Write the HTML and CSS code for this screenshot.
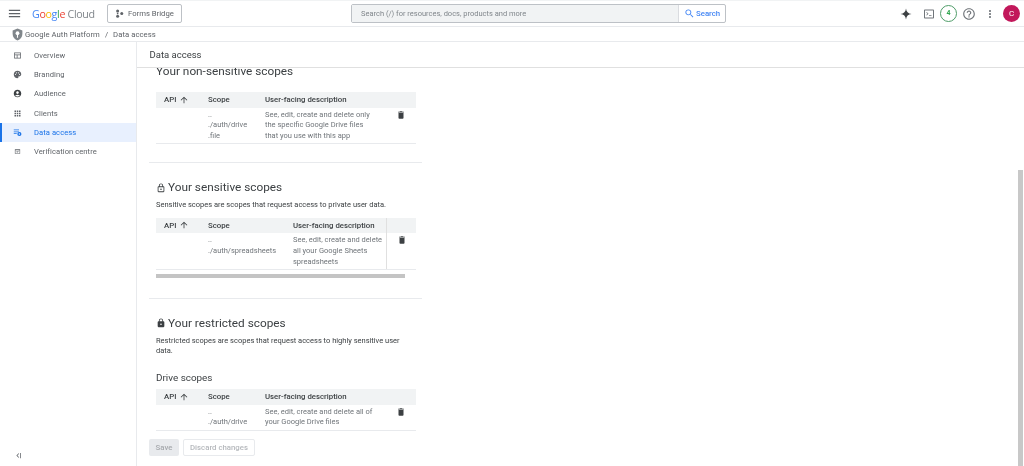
FILE: index.html
```html
<!DOCTYPE html>
<html lang="en">
<head>
<meta charset="utf-8">
<title>Data access</title>
<link rel="stylesheet" href="styles.css">
</head>
<body>
<header class="topbar">
  <svg class="ic menu" viewBox="0 0 24 24"><path d="M3 18h18v-2H3v2zm0-5h18v-2H3v2zm0-7v2h18V6H3z"/></svg>
  <div class="logo"><span class="b">G</span><span class="r">o</span><span class="y">o</span><span class="b">g</span><span class="g">l</span><span class="r">e</span><span class="cloud"> Cloud</span></div>
  <div class="project">
    <svg class="ic proj" viewBox="0 0 24 24"><circle cx="7" cy="5" r="4"/><circle cx="7" cy="19" r="4"/><circle cx="18" cy="12" r="4"/><rect x="5" y="10" width="4" height="4"/></svg>
    <span>Forms Bridge</span>
  </div>
  <div class="search">
    <div class="search-input">Search (/) for resources, docs, products and more</div>
    <div class="search-btn">
      <svg class="ic sicon" viewBox="0 0 24 24"><path d="M15.5 14h-.79l-.28-.27C15.41 12.59 16 11.11 16 9.5 16 5.91 13.09 3 9.5 3S3 5.91 3 9.5 5.91 16 9.5 16c1.61 0 3.09-.59 4.23-1.57l.27.28v.79l5 4.99L20.49 19l-4.99-5zm-6 0C7.01 14 5 11.99 5 9.5S7.01 5 9.5 5 14 7.01 14 9.5 11.99 14 9.5 14z"/></svg>
      <span>Search</span>
    </div>
  </div>
  <div class="actions">
    <svg class="ic spark" viewBox="0 0 24 24"><path d="M12 1C12.8 7.8 16.2 11.2 23 12 16.2 12.8 12.8 16.2 12 23 11.2 16.2 7.8 12.8 1 12 7.8 11.2 11.2 7.8 12 1Z"/></svg>
    <svg class="ic term" viewBox="0 0 24 24"><path d="M20 3H4c-1.1 0-2 .9-2 2v14c0 1.1.9 2 2 2h16c1.1 0 2-.9 2-2V5c0-1.1-.9-2-2-2zm0 16H4V5h16v14zM6.5 9l1-1 3.500 3.500L7.500 15l-1-1 2.500-2.500zM12 14h5v1.500h-5z"/></svg>
    <div class="badge">4</div>
    <svg class="ic help" viewBox="0 0 24 24"><path d="M11 18h2v-2h-2v2zm1-16C6.48 2 2 6.48 2 12s4.48 10 10 10 10-4.48 10-10S17.52 2 12 2zm0 18c-4.41 0-8-3.59-8-8s3.59-8 8-8 8 3.59 8 8-3.59 8-8 8zm0-14c-2.21 0-4 1.79-4 4h2c0-1.1.9-2 2-2s2 .9 2 2c0 2-3 1.750-3 5h2c0-2.250 3-2.500 3-5 0-2.210-1.790-4-4-4z"/></svg>
    <svg class="ic more" viewBox="0 0 24 24"><path d="M12 8c1.100 0 2-.9 2-2s-.9-2-2-2-2 .9-2 2 .9 2 2 2zm0 2c-1.100 0-2 .9-2 2s.9 2 2 2 2-.9 2-2-.9-2-2-2zm0 6c-1.100 0-2 .9-2 2s.9 2 2 2 2-.9 2-2-.9-2-2-2z"/></svg>
    <div class="avatar">C</div>
  </div>
</header>

<div class="crumbs">
  <svg class="ic shield" viewBox="0 0 24 24"><path d="M12 1 3 4.500v6.500c0 5.500 3.800 10.400 9 12 5.200-1.600 9-6.500 9-12V4.500L12 1z"/><circle cx="12" cy="9.500" r="3.500" fill="#fff"/><rect x="11" y="11" width="2" height="7" fill="#fff"/></svg>
  <span>Google Auth Platform</span><span class="sep">/</span><span>Data access</span>
</div>

<div class="shell">
  <nav class="sidebar">
    <ul class="nav">
      <li class="nav-item">
        <svg class="ic nav-ic" viewBox="0 0 24 24"><path d="M3 4h18v16H3V4zm2 2v3h14V6H5zm0 5v7h5v-7H5zm7 0v7h7v-7h-7z"/></svg>
        <span>Overview</span>
      </li>
      <li class="nav-item">
        <svg class="ic nav-ic" viewBox="0 0 24 24"><path d="M12 2C6.490 2 2 6.490 2 12s4.490 10 10 10c1.380 0 2.500-1.120 2.500-2.500 0-.61-.23-1.200-.64-1.670-.08-.1-.13-.21-.13-.33 0-.28.22-.5.5-.5H16c3.310 0 6-2.690 6-6 0-4.960-4.490-9-10-9zm5.500 11c-.83 0-1.500-.67-1.500-1.500s.67-1.500 1.500-1.500 1.500.67 1.500 1.500-.67 1.500-1.500 1.500zm-3-4c-.83 0-1.500-.67-1.500-1.500S13.670 6 14.500 6s1.500.67 1.500 1.500S15.330 9 14.500 9zM5 11.500c0-.83.67-1.500 1.500-1.500s1.500.67 1.500 1.500S7.330 13 6.500 13 5 12.330 5 11.500zm6-4c0 .83-.67 1.500-1.500 1.500S8 8.330 8 7.500 8.670 6 9.500 6s1.500.67 1.500 1.500z"/></svg>
        <span>Branding</span>
      </li>
      <li class="nav-item">
        <svg class="ic nav-ic dark" viewBox="0 0 24 24"><path d="M12 2C6.480 2 2 6.480 2 12s4.480 10 10 10 10-4.480 10-10S17.520 2 12 2zm0 4c1.930 0 3.500 1.570 3.500 3.500S13.930 13 12 13s-3.500-1.570-3.500-3.500S10.070 6 12 6zm0 14c-2.030 0-4.430-.82-6.140-2.880C7.550 15.800 9.680 15 12 15s4.450.8 6.140 2.120C16.430 19.180 14.030 20 12 20z"/></svg>
        <span>Audience</span>
      </li>
      <li class="nav-item">
        <svg class="ic nav-ic" viewBox="0 0 24 24"><path d="M4 8h4V4H4v4zm6 12h4v-4h-4v4zm-6 0h4v-4H4v4zm0-6h4v-4H4v4zm6 0h4v-4h-4v4zm6-10v4h4V4h-4zm-6 4h4V4h-4v4zm6 6h4v-4h-4v4zm0 6h4v-4h-4v4z"/></svg>
        <span>Clients</span>
      </li>
      <li class="nav-item active">
        <svg class="ic nav-ic" viewBox="0 0 24 24"><path d="M2 4h14v2H2V4zm0 5h14v2H2V9zm0 5h8v2H2v-2z"/><circle cx="17" cy="16" r="5.500"/><circle cx="17" cy="16" r="2" fill="#e8f0fe"/></svg>
        <span>Data access</span>
      </li>
      <li class="nav-item">
        <svg class="ic nav-ic small" viewBox="0 0 24 24"><path d="M3 4h18v16H3V4zm2 4v10h14V8H5zm3 5 1.500-1.500 1.500 1.500 3.500-3.500L16 11l-5 5-3-3z"/></svg>
        <span>Verification centre</span>
      </li>
    </ul>
    <svg class="ic collapse" viewBox="0 0 24 24"><path d="M15 6 9 12l6 6 1.400-1.400L11.800 12l4.600-4.600L15 6zM19 5h2v14h-2z"/></svg>
  </nav>

  <main class="main">
    <div class="page-title">Data access</div>
    <div class="pane">
      <div class="content">
        <section class="sec first">
          <h2 class="h2 plain">Your non-sensitive scopes</h2>
          <div class="table">
            <div class="row head"><div class="cell api">API <svg class="ic arrow" viewBox="0 0 24 24"><path d="M4 12l1.410 1.410L11 7.830V20h2V7.830l5.580 5.590L20 12l-8-8-8 8z"/></svg></div><div class="cell">Scope</div><div class="cell">User-facing description</div><div class="cell"></div></div>
            <div class="row body">
              <div class="cell"></div>
              <div class="cell">..<br>./auth/drive<br>.file</div>
              <div class="cell desc">See, edit, create and delete only the specific Google Drive files that you use with this app</div>
              <div class="cell trash"><svg class="ic del" viewBox="0 0 24 24"><path d="M6 19c0 1.100.9 2 2 2h8c1.100 0 2-.9 2-2V7H6v12zM19 4h-3.500l-1-1h-5l-1 1H5v2h14V4z"/></svg></div>
            </div>
          </div>
        </section>
        <hr class="rule r1">
        <section class="sec">
          <h2 class="h2"><svg class="ic lock" viewBox="0 0 24 24"><path d="M18 8h-1V6c0-2.760-2.240-5-5-5S7 3.240 7 6v2H6c-1.100 0-2 .9-2 2v10c0 1.100.9 2 2 2h12c1.100 0 2-.9 2-2V10c0-1.100-.9-2-2-2zM9 6c0-1.660 1.340-3 3-3s3 1.340 3 3v2H9V6zm9 14H6V10h12v10zm-6-3c1.100 0 2-.9 2-2s-.9-2-2-2-2 .9-2 2 .9 2 2 2z"/></svg>Your sensitive scopes</h2>
          <p class="para">Sensitive scopes are scopes that request access to private user data.</p>
          <div class="table wide">
            <div class="row head"><div class="cell api">API <svg class="ic arrow" viewBox="0 0 24 24"><path d="M4 12l1.410 1.410L11 7.830V20h2V7.830l5.580 5.590L20 12l-8-8-8 8z"/></svg></div><div class="cell">Scope</div><div class="cell">User-facing description</div><div class="cell divided"></div></div>
            <div class="row body">
              <div class="cell"></div>
              <div class="cell">..<br>./auth/spreadsheets</div>
              <div class="cell">See, edit, create and delete all your Google Sheets spreadsheets</div>
              <div class="cell trash divided"><svg class="ic del" viewBox="0 0 24 24"><path d="M6 19c0 1.100.9 2 2 2h8c1.100 0 2-.9 2-2V7H6v12zM19 4h-3.500l-1-1h-5l-1 1H5v2h14V4z"/></svg></div>
            </div>
          </div>
          <div class="hscroll"></div>
        </section>
        <hr class="rule r2">
        <section class="sec">
          <h2 class="h2"><svg class="ic lock" viewBox="0 0 24 24"><path d="M18 8h-1V6c0-2.760-2.240-5-5-5S7 3.240 7 6v2H6c-1.100 0-2 .9-2 2v10c0 1.100.9 2 2 2h12c1.100 0 2-.9 2-2V10c0-1.100-.9-2-2-2zm-6 9c-1.100 0-2-.9-2-2s.9-2 2-2 2 .9 2 2-.9 2-2 2zm3.100-9H8.900V6c0-1.710 1.390-3.100 3.100-3.100 1.710 0 3.100 1.390 3.100 3.100v2z"/></svg>Your restricted scopes</h2>
          <p class="para narrow">Restricted scopes are scopes that request access to highly sensitive user data.</p>
          <h3 class="h3">Drive scopes</h3>
          <div class="table">
            <div class="row head"><div class="cell api">API <svg class="ic arrow" viewBox="0 0 24 24"><path d="M4 12l1.410 1.410L11 7.830V20h2V7.830l5.580 5.590L20 12l-8-8-8 8z"/></svg></div><div class="cell">Scope</div><div class="cell">User-facing description</div><div class="cell"></div></div>
            <div class="row body short">
              <div class="cell"></div>
              <div class="cell">..<br>./auth/drive</div>
              <div class="cell desc">See, edit, create and delete all of your Google Drive files</div>
              <div class="cell trash"><svg class="ic del" viewBox="0 0 24 24"><path d="M6 19c0 1.100.9 2 2 2h8c1.100 0 2-.9 2-2V7H6v12zM19 4h-3.500l-1-1h-5l-1 1H5v2h14V4z"/></svg></div>
            </div>
          </div>
        </section>
        <div class="buttons">
          <button class="btn save">Save</button>
          <button class="btn discard">Discard changes</button>
        </div>
      </div>
      <div class="vscroll"></div>
    </div>
  </main>
</div>
</body>
</html>
```

FILE: styles.css
```css
* { box-sizing: border-box; }
html, body { margin: 0; height: 466px; overflow: hidden; background: #fff; }
body { font-family: Roboto, "Liberation Sans", sans-serif; color: #3c4043; font-size: 8px; filter: blur(0.3px); }
.ic { display: block; fill: currentColor; flex: none; }

.topbar { height: 27px; display: flex; align-items: center; border-bottom: 1px solid #e8eaed; border-top: 1px solid #f1f3f4; }
.menu { width: 15px; height: 15px; margin-left: 7px; color: #5f6368; }
.logo { margin-left: 10px; width: 63px; font-family: "Open Sans", sans-serif; font-size: 10.7px; letter-spacing: -0.35px; white-space: pre; }
.logo .b { color: #4285f4; } .logo .r { color: #ea4335; } .logo .y { color: #fbbc04; } .logo .g { color: #34a853; }
.logo .cloud { color: #80868b; }
.project { margin-left: 12px; width: 75px; height: 19px; border: 1px solid #bdc1c6; border-radius: 2px; display: flex; align-items: center; padding-left: 7px; gap: 4px; font-size: 7.7px; color: #5f6368; }
.proj { width: 9px; height: 9px; color: #5f6368; }
.search { margin-left: 169px; width: 375px; height: 19px; display: flex; border: 1px solid #bdc1c6; border-radius: 2px; }
.search-input { flex: 1; background: #f1f3f4; padding-left: 9px; line-height: 17px; font-size: 7.5px; color: #80868b; }
.search-btn { width: 47px; border-left: 1px solid #dadce0; display: flex; align-items: center; padding-left: 5px; gap: 1px; color: #4285f4; font-size: 7.8px; font-weight: 500; }
.sicon { width: 11px; height: 11px; }
.actions { margin-left: auto; display: flex; align-items: center; padding-right: 4px; }
.spark { width: 12px; height: 12px; color: #3c4043; margin-right: 2px; }
.term { width: 12px; height: 12px; color: #70757a; margin-left: 9px; }
.badge { width: 17px; height: 17px; margin-left: 5px; border: 1px solid #4f9d69; border-radius: 50%; color: #34a853; font-size: 7px; font-weight: 700; text-align: center; line-height: 15px; }
.help { width: 14px; height: 14px; color: #70757a; margin-left: 5px; }
.more { width: 12px; height: 12px; color: #70757a; margin-left: 8px; }
.avatar { width: 17px; height: 17px; margin-left: 7px; border-radius: 50%; background: #c2185b; color: #fff; font-size: 8px; text-align: center; line-height: 17px; }

.crumbs { height: 15px; display: flex; align-items: center; border-bottom: 1px solid #e8eaed; font-size: 7.7px; color: #5f6368; padding-left: 11px; letter-spacing: 0.05px; }
.shield { width: 13px; height: 13px; color: #80868b; margin-right: 1px; }
.sep { margin: 0 5px; }

.shell { display: flex; height: 424px; }
.sidebar { width: 137px; border-right: 1px solid #e8eaed; display: flex; flex-direction: column; padding-top: 4px; }
.nav { list-style: none; margin: 0; padding: 0; }
.nav-item { height: 19.2px; display: flex; align-items: center; padding-left: 13px; font-size: 7.6px; color: #5f6368; letter-spacing: 0.06px; }
.nav-item span { margin-left: 12px; }
.nav-ic { width: 9px; height: 9px; color: #5f6368; }
.nav-ic.dark { color: #3c4043; }
.nav-ic.small { width: 7px; height: 7px; margin: 0 1px; }
.nav-item.active { background: #e8f0fe; color: #1a73e8; border-left: 2px solid #1a73e8; padding-left: 11px; }
.nav-item.active .nav-ic { color: #1a73e8; }
.collapse { width: 9px; height: 9px; margin: auto 0 6px 13px; color: #5f6368; }

.main { flex: 1; display: flex; flex-direction: column; min-width: 0; }
.page-title { height: 26px; flex: none; line-height: 25px; padding-left: 12.5px; font-size: 9.5px; color: #3c4043; border-bottom: 1px solid #e0e0e0; background: #fff; position: relative; z-index: 1; }
.pane { flex: 1; display: flex; overflow: hidden; min-height: 0; }
.content { width: 286px; margin-left: 12px; flex: none; }
.sec { padding: 0 7px; }
.first { margin-top: -4px; }
.h2 { margin: 0; font-size: 11.8px; font-weight: 400; line-height: 15px; color: #3c4043; display: flex; align-items: center; height: 15px; }
.lock { width: 10px; height: 10px; margin-right: 2px; color: #3c4043; }
.para { margin: 5px 0 0; font-size: 7.5px; line-height: 10.7px; color: #3c4043; }
.narrow { width: 255px; }
.h3 { margin: 14px 0 0; font-size: 9.9px; font-weight: 400; line-height: 14px; color: #3c4043; }

.table { width: 260px; margin-top: 7px; }
.first .table { margin-top: 13px; }
.h3 + .table { margin-top: 4px; }
.row { display: grid; grid-template-columns: 44px 57px 129px 30px; }
.wide .row { grid-template-columns: 44px 85px 101px 30px; }
.head { height: 15.5px; background: #f1f3f4; font-size: 7.8px; font-weight: 500; color: #3c4043; line-height: 15.5px; }
.body { height: 36.500px; border-bottom: 1px solid #e8eaed; font-size: 7.5px; line-height: 10.7px; color: #70757a; padding-top: 2px; }
.short { height: 26px; }
.cell { padding-left: 8px; min-width: 0; }
.desc { padding-right: 9px; }
.api { display: flex; align-items: center; gap: 3px; }
.arrow { width: 10px; height: 10px; }
.divided { border-left: 1px solid #e0e0e0; margin-top: -2px; padding-top: 2px; }
.head .divided { margin-top: 0; padding-top: 0; }
.trash { padding-left: 10px; }
.del { width: 10px; height: 10px; color: #3c4043; }
.hscroll { width: 249px; height: 4px; margin-top: 4px; background: #c4c4c4; }

.rule { border: 0; border-top: 1px solid #e8eaed; margin: 0; width: 273px; }
.r1 { margin: 18px 0 17px; }
.r2 { margin: 20px 0 17px; }

.buttons { display: flex; gap: 4px; margin-top: 8px; }
.btn { height: 17px; font-family: inherit; font-size: 7.8px; font-weight: 500; border-radius: 2px; padding: 0; }
.save { width: 30px; background: #e8eaed; border: 0; color: #a6a9ad; }
.discard { width: 72px; background: #fff; border: 1px solid #e8eaed; color: #b5b8bc; }

.vscroll { width: 5px; margin: 102px 1px 0 auto; background: #c8c8c8; }
```
